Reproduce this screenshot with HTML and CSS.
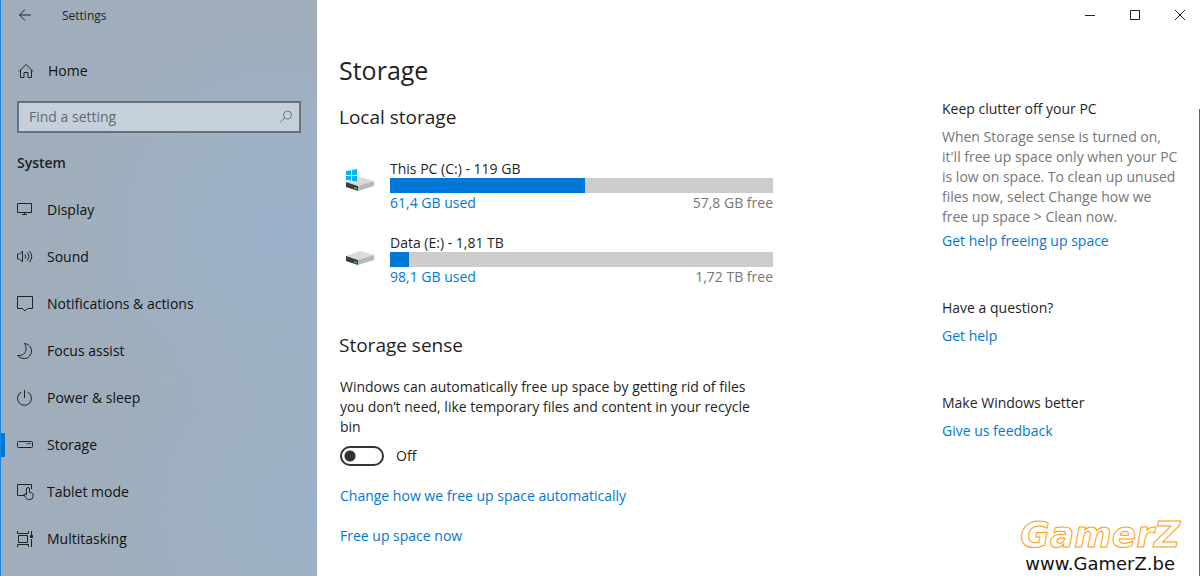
FILE: index.html
```html
<!DOCTYPE html>
<html lang="en">
<head>
    <meta charset="UTF-8">
    <meta name="viewport" content="width=device-width, initial-scale=1.0">
    <title>Settings</title>
    <link rel="stylesheet" href="styles.css">
</head>
<body>

<div class="window">
    <aside class="sidebar">
        <header class="title-bar">
            <button class="back-button" aria-label="Back">
                <svg width="14" height="14" viewBox="0 0 14 14"><path d="M13 6H1.500M7 .5L1.500 6 7 11.500"/></svg>
            </button>
            <span>Settings</span>
        </header>

        <a class="home-link" href="#">
            <svg width="16" height="16" viewBox="0 0 16 16"><path d="M1 8.500l7-7 7 7M2.500 7v7.500h3.500v-5h4v5h3.500V7"/></svg>
            Home
        </a>

        <div class="search">
            <input type="text" class="search-input" placeholder="Find a setting" aria-label="Find a setting">
            <svg width="14" height="14" viewBox="0 0 14 14"><circle cx="8.500" cy="5" r="4"/><path d="M5.500 8L1 12.500"/></svg>
        </div>

        <h2 class="group-title">System</h2>
        <nav class="menu">
            <a href="#">
                <svg width="18" height="18" viewBox="0 0 18 18"><path d="M1.500 2.500h14v9h-14zM8.500 11.500v2M6 13.500h5"/></svg>
                Display
            </a>
            <a href="#">
                <svg width="18" height="18" viewBox="0 0 18 18"><path d="M1.500 6h2l3-3v11l-3-3h-2zM9 6.500q1.500 2 0 4M11.500 4.500q3 4 0 8M13.500 3q4.500 5.500 0 11"/></svg>
                Sound
            </a>
            <a href="#">
                <svg width="18" height="18" viewBox="0 0 18 18"><path d="M1.500 1.500h15v12h-5L9 16l-2.500-2.500h-5z"/></svg>
                Notifications &amp; actions
            </a>
            <a href="#">
                <svg width="18" height="18" viewBox="0 0 18 18"><path d="M8.500 1.500c4 .5 7 3.500 7 7.500s-3 7.500-7 7.500c-3 0-5.500-1-7-3 5 .5 9-2.500 8.500-7 0-2-.5-3.500-1.500-5z"/></svg>
                Focus assist
            </a>
            <a href="#">
                <svg width="18" height="18" viewBox="0 0 18 18"><path d="M8.500 1v8M5.500 3a7 7 0 1 0 6 0"/></svg>
                Power &amp; sleep
            </a>
            <a href="#" class="active" aria-current="page">
                <svg width="18" height="18" viewBox="0 0 18 18"><rect x="1.500" y="5.500" width="15" height="6" rx="1"/><path d="M10.500 7.500h1M12.500 7.500h2"/></svg>
                Storage
            </a>
            <a href="#">
                <svg width="18" height="18" viewBox="0 0 18 18"><path d="M8 12.500H1.500v-11h14V6"/><path d="M10.500 12V6q0-1.500 1.500-1.500T13.500 6v3.500l2 .3q1.500.3 1.500 1.700v2q0 3-3 3h-1.500q-2 0-3-2l-1.500-3q.5-1.500 1.500-.5l1 1"/></svg>
                Tablet mode
            </a>
            <a href="#">
                <svg width="18" height="18" viewBox="0 0 18 18"><path d="M1.500 1v2.500h11V1M1.500 17v-2.500h11V17M2.500 5.500h9v7h-9zM15.500 1v4M15.500 9v8"/><path fill="#222" d="M14.500 5.500h2v2h-2z"/></svg>
                Multitasking
            </a>
        </nav>
    </aside>

    <div class="page">
        <div class="window-controls">
            <button aria-label="Minimize"><svg width="12" height="12" viewBox="0 0 12 12"><path d="M1 6.500h10"/></svg></button>
            <button aria-label="Maximize"><svg width="12" height="12" viewBox="0 0 12 12"><path d="M1.500 1.500h9v9h-9z"/></svg></button>
            <button aria-label="Close"><svg width="12" height="12" viewBox="0 0 12 12"><path d="M1 1l10 10M11 1L1 11"/></svg></button>
        </div>

        <div class="columns">
            <main class="content">
                <h1>Storage</h1>
                <h2>Local storage</h2>

                <div class="drive">
                    <svg class="drive-icon" width="30" height="28" viewBox="0 0 30 28">
                        <path fill="#d9dadc" d="M1 15l14-5 14 4-15 5z"/>
                        <path fill="#b7b8bb" d="M13 19l16-5v5l-16 5z"/>
                        <path fill="#3c3d3f" d="M1 15l12 4v5L1 20z"/>
                        <path fill="#3fbf46" d="M9 20l3 1v1.500l-3-1z"/>
                        <path fill="#00b7f1" d="M1 4l5-.8V8H1zM7 3l5-1v6H7zM1 9h5v4.500L1 13zM7 9h5v5.500l-5-.8z"/>
                    </svg>
                    <div class="drive-info">
                        <label for="drive-c">This PC (C:) - 119 GB</label>
                        <progress id="drive-c" max="100" value="51"></progress>
                        <div class="drive-usage"><a href="#">61,4 GB used</a><span>57,8 GB free</span></div>
                    </div>
                </div>

                <div class="drive">
                    <svg class="drive-icon" width="30" height="28" viewBox="0 0 30 28">
                        <path fill="#d9dadc" d="M1 15l14-5 14 4-15 5z"/>
                        <path fill="#b7b8bb" d="M13 19l16-5v5l-16 5z"/>
                        <path fill="#3c3d3f" d="M1 15l12 4v5L1 20z"/>
                        <path fill="#3fbf46" d="M9 20l3 1v1.500l-3-1z"/>
                    </svg>
                    <div class="drive-info">
                        <label for="drive-e">Data (E:) - 1,81 TB</label>
                        <progress id="drive-e" max="100" value="5"></progress>
                        <div class="drive-usage"><a href="#">98,1 GB used</a><span>1,72 TB free</span></div>
                    </div>
                </div>

                <h2 class="sense-title">Storage sense</h2>
                <p>Windows can automatically free up space by getting rid of files you don’t need, like temporary files and content in your recycle bin</p>
                <label class="toggle"><input type="checkbox" role="switch">Off</label>
                <a class="action" href="#">Change how we free up space automatically</a>
                <a class="action" href="#">Free up space now</a>
            </main>

            <aside class="help">
                <section>
                    <h3>Keep clutter off your PC</h3>
                    <p>When Storage sense is turned on, it'll free up space only when your PC is low on space. To clean up unused files now, select Change how we free up space &gt; Clean now.</p>
                    <a href="#">Get help freeing up space</a>
                </section>
                <section>
                    <h3>Have a question?</h3>
                    <a href="#">Get help</a>
                </section>
                <section>
                    <h3>Make Windows better</h3>
                    <a href="#">Give us feedback</a>
                </section>
            </aside>
        </div>
    </div>

    <div class="watermark">
        <span class="watermark-name">GamerZ</span>
        <span class="watermark-url">www.GamerZ.be</span>
    </div>
</div>

</body>
</html>
```

FILE: styles.css
```css
* {
    box-sizing: border-box;
}
body {
    margin: 0;
    font-family: "Open Sans", "Noto Sans", sans-serif;
    font-size: 14px;
    line-height: 20px;
    color: #1f1f1f;
    background-color: #fff;
}
h1, h2, h3, p {
    margin: 0;
    font-weight: 400;
}
a {
    color: #0078d7;
    text-decoration: none;
}
button {
    padding: 0;
    border: none;
    background: none;
}
svg {
    flex: none;
    fill: none;
    stroke: #222;
}
.window {
    position: relative;
    display: flex;
    min-height: 100vh;
    overflow: hidden;
}

/* left pane */
.sidebar {
    flex: none;
    width: 317px;
    border-left: 1px solid #1683dc;
    background:
        radial-gradient(circle at 90% 40%, #9bb2cb 0, transparent 45%),
        radial-gradient(circle at 100% 88%, #9bb1c8 0, transparent 35%),
        #a0aebc;
}
.sidebar a {
    color: #111;
}
.title-bar {
    display: flex;
    align-items: center;
    gap: 30px;
    height: 32px;
    padding-left: 17px;
    font-size: 12px;
}
.back-button {
    display: flex;
}
.home-link {
    display: flex;
    align-items: center;
    gap: 14px;
    height: 40px;
    margin-top: 19px;
    padding-left: 17px;
}
.search {
    display: flex;
    align-items: center;
    height: 32px;
    margin: 10px 16px 0;
    padding-right: 6px;
    border: 2px solid #66727e;
    background-color: #c6d0da;
}
.search svg {
    stroke: #6b7680;
}
.search-input {
    flex: 1;
    min-width: 0;
    padding: 0 10px;
    border: none;
    outline: none;
    background: none;
    font: inherit;
}
.search-input::placeholder {
    color: #616a73;
    opacity: 1;
}
.group-title {
    margin: 20px 16px 13px;
    font-size: 14px;
    font-weight: 600;
}
.menu a {
    display: flex;
    align-items: center;
    gap: 13px;
    height: 47px;
    padding-left: 15px;
}
.menu .active {
    background: linear-gradient(#0078d7, #0078d7) left center / 4px 24px no-repeat;
}

/* right pane */
.page {
    display: flex;
    flex: 1;
    flex-direction: column;
    min-width: 0;
}
.window-controls {
    display: flex;
    justify-content: flex-end;
    gap: 5px;
    height: 30px;
}
.window-controls button {
    display: flex;
    align-items: center;
    justify-content: center;
    width: 40px;
}
.columns {
    display: flex;
    flex: 1;
    justify-content: space-between;
    padding-left: 22px;
}
.content {
    flex: 0 1 434px;
    padding-top: 22px;
}
.content h1 {
    font-size: 25px;
    line-height: 36px;
}
.content h2 {
    margin-top: 16px;
    font-size: 19px;
    line-height: 26px;
}
.drive {
    display: flex;
    gap: 15px;
    margin-top: 20px;
    padding-left: 6px;
}
.content h2 + .drive {
    margin-top: 29px;
}
.drive-icon {
    margin-top: 8px;
    stroke: none;
}
.drive-info {
    flex: 1;
}
.drive-info label {
    display: block;
    line-height: 19px;
}
.drive-info progress {
    display: block;
    width: 100%;
    height: 15px;
    border: none;
    appearance: none;
    background-color: #ccc;
}
.drive-info progress::-webkit-progress-bar {
    background-color: #ccc;
}
.drive-info progress::-webkit-progress-value {
    background-color: #0078d7;
}
.drive-usage {
    display: flex;
    justify-content: space-between;
    color: #767676;
}
.content .sense-title {
    margin: 45px 0 19px;
}
.toggle {
    display: flex;
    align-items: center;
    gap: 12px;
    margin: 9px 0 20px 1px;
}
.toggle input {
    width: 44px;
    height: 20px;
    margin: 0;
    border: 2px solid #333;
    border-radius: 10px;
    appearance: none;
    background: radial-gradient(circle at 8px 8px, #333 5px, transparent 6px);
}
.content p {
    margin-left: 1px;
}
.action {
    display: block;
    margin: 0 0 20px 1px;
}
.help {
    flex: 0 0 258px;
    margin-top: 79px;
    padding-right: 19px;
    border-right: 1px solid #666;
}
.help section {
    margin-bottom: 47px;
}
.help h3 {
    margin-bottom: 8px;
    font-size: 14px;
}
.help section:first-child h3 {
    margin-top: -10px;
}
.help p {
    margin-bottom: 4px;
    color: #767676;
}

/* site mark over the corner of the window */
.watermark {
    position: absolute;
    right: 20px;
    bottom: 2px;
    display: flex;
    flex-direction: column;
    align-items: center;
    font-family: "DejaVu Sans", sans-serif;
}
.watermark-name {
    font-size: 36px;
    font-style: italic;
    font-weight: 700;
    line-height: 38px;
    color: #fff;
    -webkit-text-stroke: 1px #ff9c0a;
}
.watermark-url {
    font-size: 18px;
    line-height: 20px;
    color: #111;
}
```
